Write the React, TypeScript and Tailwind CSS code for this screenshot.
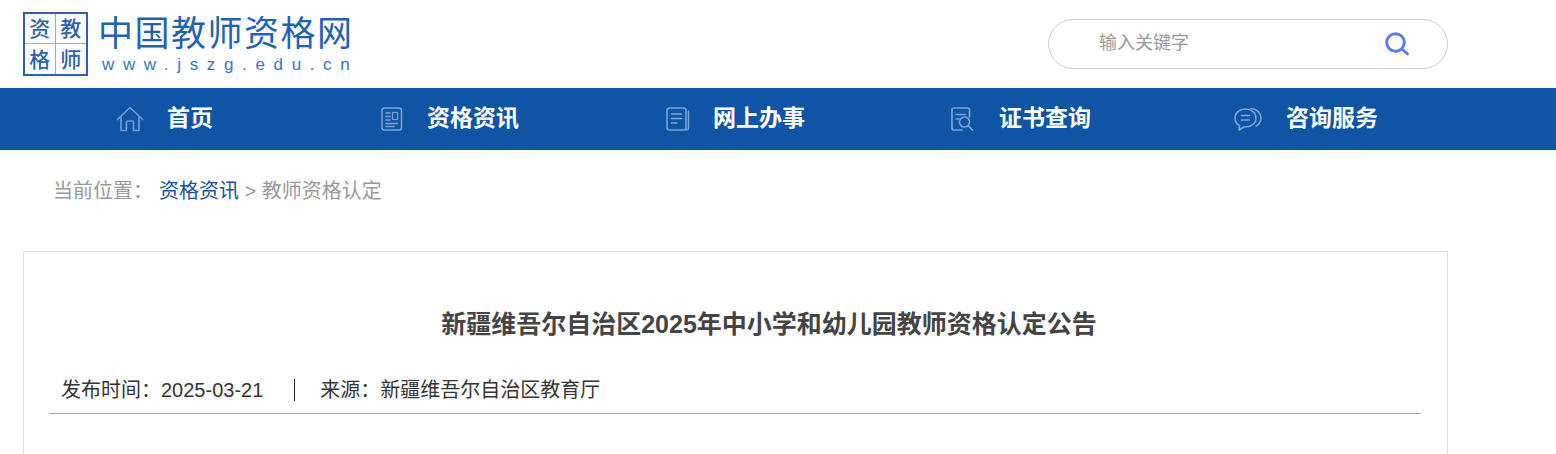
const font = { fontFamily: '"Liberation Sans", "Noto Sans CJK SC", sans-serif' };

const HomeIcon = () => (
    <svg width="28" height="26" viewBox="0 0 28 26" fill="none" stroke="#6f9ccf" strokeWidth="1.7" strokeLinejoin="round" strokeLinecap="round">
        <path d="M1.5 13.5 L14 1.5 L26.5 13.5" />
        <path d="M5 11 V24.5 H10.5 V16.5 Q10.5 15 12 15 H16 Q17.5 15 17.5 16.5 V24.5 H23 V11" />
    </svg>
);

const NewsIcon = () => (
    <svg width="22" height="24" viewBox="0 0 22 24" fill="none" stroke="#7aa3d3" strokeWidth="1.5" strokeLinecap="round">
        <rect x="1" y="1" width="19.5" height="22" rx="2.5" />
        <path d="M5 6 H9 M5 9.5 H9 M5 13 H9 M5 16.5 H16.5 M5 19.5 H13" />
        <rect x="11.5" y="5.5" width="5" height="7" strokeWidth="1.2" />
    </svg>
);

const BookIcon = () => (
    <svg width="24" height="24" viewBox="0 0 24 24" fill="none" stroke="#7aa3d3" strokeWidth="1.6" strokeLinecap="round">
        <rect x="1" y="1" width="19" height="22" rx="2.5" />
        <path d="M22.5 4 V21 Q22.5 23 20 23" />
        <path d="M5.5 7 H15.5 M5.5 11.5 H15.5 M5.5 16 H11" />
    </svg>
);

const SearchDocIcon = () => (
    <svg width="23" height="24" viewBox="0 0 23 24" fill="none" stroke="#7aa3d3" strokeWidth="1.7" strokeLinecap="round">
        <path d="M18.5 10 V3 Q18.5 1 16.5 1 H3 Q1 1 1 3 V21 Q1 23 3 23 H11" />
        <path d="M5 7.5 H14.5 M5 12 H8" />
        <circle cx="13.5" cy="15" r="5" />
        <path d="M17.5 19 L21.5 23" />
    </svg>
);

const ChatIcon = () => (
    <svg width="28" height="24" viewBox="0 0 28 24" fill="none" stroke="#7aa3d3" strokeWidth="1.6" strokeLinecap="round" strokeLinejoin="round">
        <path d="M11.5 2 C5.5 2 1 5.8 1 11 C1 14.5 2.8 17 5.5 18.7 L5 23 L10 20 C16.5 20.5 22 16.8 22 11 C22 5.8 17.5 2 11.5 2 Z" />
        <path d="M17 1.5 C23 2 27 6 27 11 C27 14.5 25 17.5 22 19" />
        <path d="M7.5 8.5 H15.5 M7.5 13 H15.5" />
    </svg>
);

const navItems = [
    { label: '首页', icon: <HomeIcon />, width: 'w-[265px]', gap: 'w-[51px]' },
    { label: '资格资讯', icon: <NewsIcon />, width: 'w-[285px]', gap: 'w-[46px]' },
    { label: '网上办事', icon: <BookIcon />, width: 'w-[285px]', gap: 'w-[47px]' },
    { label: '证书查询', icon: <SearchDocIcon />, width: 'w-[283px]', gap: 'w-[48px]' },
    { label: '咨询服务', icon: <ChatIcon />, width: 'w-[200px]', gap: 'w-[52px]' },
];

const Logo = () => (
    <div className="flex items-start">
        <div className="grid grid-cols-2 grid-rows-2 w-[65px] h-[64px] border-2 border-[#2a62b0] bg-white mt-[12px] text-[#2a64b0] text-[21px] leading-none font-medium">
            <div className="flex items-center justify-center border-r border-b border-[#8fb0dc]">资</div>
            <div className="flex items-center justify-center border-b border-[#8fb0dc]">教</div>
            <div className="flex items-center justify-center border-r border-[#8fb0dc]">格</div>
            <div className="flex items-center justify-center">师</div>
        </div>
        <div className="ml-[10px] mt-[12px] text-[#1f62b5]">
            <div className="text-[35px] leading-[44px] font-normal tracking-[1.5px] whitespace-nowrap">中国教师资格网</div>
            <div className="ml-[4px] text-[17px] leading-[18px] tracking-[8.65px] whitespace-nowrap text-[#3a75bd]">www.jszg.edu.cn</div>
        </div>
    </div>
);

const App = () => {
    return (
        <div className="w-[1556px] h-[454px] overflow-hidden bg-white" style={font}>
            {/* Header */}
            <div className="h-[88px] pl-[23px] pr-[108px] flex justify-between items-start">
                <Logo />
                <div className="mt-[19px] w-[400px] h-[50px] rounded-[25px] border border-[#cccccc] flex items-center justify-between pl-[50px] pr-[37px]">
                    <span className="text-[18px] leading-none text-[#999999] -mt-[3px]">输入关键字</span>
                    <svg width="26" height="26" viewBox="0 0 26 26" fill="none" stroke="#5b7cf0" strokeWidth="3" strokeLinecap="round">
                        <circle cx="11.5" cy="11.5" r="8.8" />
                        <path d="M18.5 18.5 L23.5 23" />
                    </svg>
                </div>
            </div>

            {/* Nav */}
            <div className="h-[62px] bg-[#1055a5] pl-[116px] flex items-center">
                {navItems.map(item => (
                    <div key={item.label} className={`flex items-center ${item.width}`}>
                        <div className={`${item.gap} shrink-0 flex items-center`}>{item.icon}</div>
                        <span className="text-[23px] leading-none font-bold text-white -mt-[2px] whitespace-nowrap">{item.label}</span>
                    </div>
                ))}
            </div>

            {/* Breadcrumb */}
            <div className="pl-[53px] h-[101px] pt-[28px] text-[20px] leading-[26px] text-[#999999] whitespace-nowrap">
                当前位置：<span className="ml-[6px] text-[#1b4f9c]">资格资讯</span> &gt; 教师资格认定
            </div>

            {/* Article */}
            <div className="ml-[23px] w-[1425px] h-[400px] border border-[#dddddd] pl-[25px] pr-[26px]">
                <h1 className="pl-[68px] pt-[56px] text-center text-[25px] leading-[32px] font-bold text-[#444444]">
                    新疆维吾尔自治区2025年中小学和幼儿园教师资格认定公告
                </h1>
                <div className="mt-[37px] h-[37px] pl-[12px] border-b border-[#aaaaaa] text-[20px] leading-[26px] text-[#333333] flex items-start whitespace-nowrap">
                    <span>发布时间：2025-03-21</span>
                    <span className="ml-[31px] mr-[25px] w-px h-[22px] bg-[#222222] mt-[2px]"></span>
                    <span>来源：新疆维吾尔自治区教育厅</span>
                </div>
            </div>
        </div>
    );
};

export default App;
